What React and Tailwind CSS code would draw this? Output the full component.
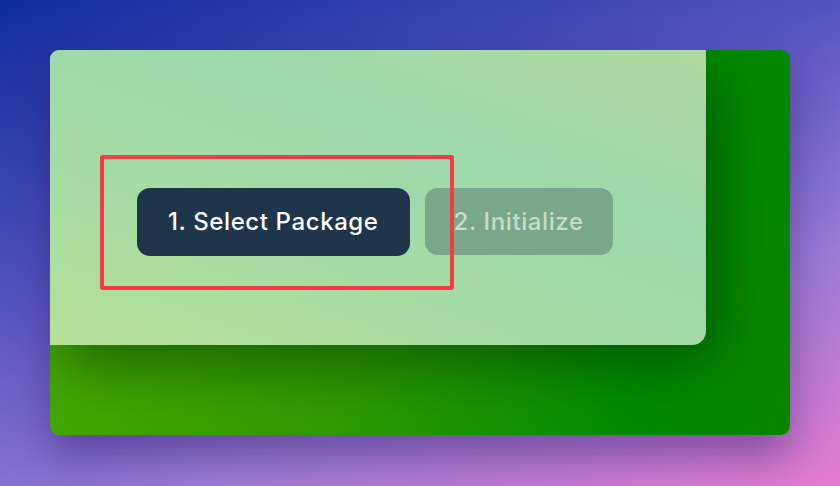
import React from 'react';

export default function App() {
  return (
    <div className="w-[840px] h-[486px] overflow-hidden bg-[linear-gradient(160deg,#0f2d9c_0%,#4c4fbc_35%,#9a7bd6_70%,#e57cd0_100%)] pt-[50px] pl-[50px]" style={{ fontFamily: 'Inter, "Noto Sans", sans-serif' }}>
      <div className="relative w-[740px] h-[385px] rounded-[9px] overflow-hidden shadow-[0_20px_40px_rgba(40,20,90,0.45)] bg-[linear-gradient(100deg,#4aaa00_0%,#2e9a00_45%,#008c00_80%,#0a8400_100%)]">
        <div className="w-[656px] h-[295px] rounded-br-[14px] bg-[linear-gradient(200deg,#b0d9a0_0%,#9dd8ac_35%,#a6dca4_65%,#b6e198_100%)] shadow-[10px_20px_60px_rgba(0,50,0,0.55)] pt-[138px] pl-[87px]">
          <div className="flex gap-[15px]">
            <button className="h-[68px] px-[31px] rounded-[13px] bg-[#1f354c] text-white text-[24px] font-medium tracking-[0.6px]">
              1. Select Package
            </button>
            <button className="h-[67px] px-[29px] rounded-[13px] bg-[#79a78a] text-[#c9dbc9] text-[24px] font-medium tracking-[0.6px]">
              2. Initialize
            </button>
          </div>
        </div>
      </div>
      <div className="absolute left-[100px] top-[155px] w-[354px] h-[135px] border-4 border-[#f73a48] rounded-[3px]" />
    </div>
  );
}
